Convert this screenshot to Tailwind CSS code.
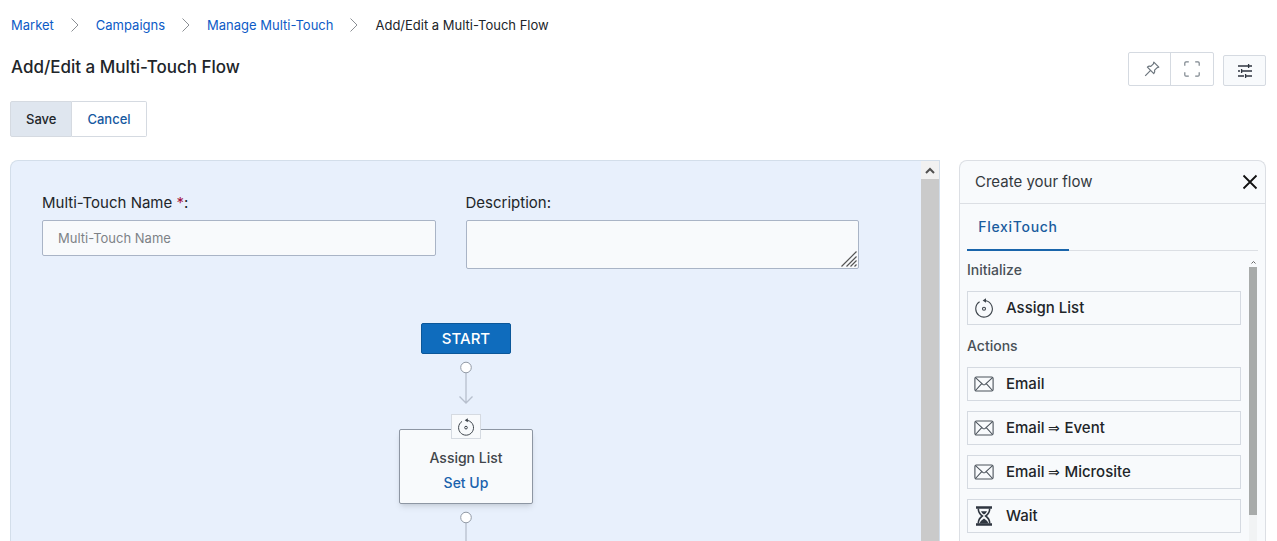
<!DOCTYPE html>
<html lang="en">
<head>
  <meta charset="UTF-8" />
  <meta name="viewport" content="width=device-width, initial-scale=1.0" />
  <title>Add/Edit a Multi-Touch Flow</title>
  <script src="https://cdn.jsdelivr.net/npm/@tailwindcss/browser@4"></script>
</head>
<body class="h-screen overflow-hidden flex flex-col pl-[10px] pr-[11px] bg-white text-[#212529] text-sm font-[Inter,sans-serif]">
  <!-- shared icons -->
  <svg class="hidden">
    <symbol id="icon-chevron" viewBox="0 0 8 14"><path d="M.5.5 7 7 .5 13.5" fill="none" stroke="#8b8f94" /></symbol>
    <symbol id="icon-list" viewBox="0 0 20 20">
      <g fill="none" stroke="#3d444b" stroke-width="1.1">
        <path d="M10 2.500A8.300 8.300 0 1 1 5.600 3.800" />
        <circle cx="10" cy="10.700" r="1.500" />
      </g>
      <path d="M8.600 2.500 12 .2v4.600z" fill="#3d444b" />
    </symbol>
    <symbol id="icon-mail" viewBox="0 0 20 16">
      <g fill="none" stroke="#4b535b" stroke-width="1.1">
        <rect x=".9" y="1" width="18.200" height="14" rx="1.500" />
        <path d="m1.500 1.700 7.300 6.600q1.200 1 2.400 0l7.300-6.600M1.500 14.500l6-6.600M18.500 14.500l-6-6.600" />
      </g>
    </symbol>
    <symbol id="icon-wait" viewBox="0 0 18 20">
      <path d="M1 .3h16v2.400H1zM1 17.300h16v2.400H1z" fill="#2f3640" />
      <path d="M3.300 2.500c0 4 1.300 5.600 4 7.500-2.700 1.900-4 3.500-4 7.500M14.700 2.500c0 4-1.300 5.600-4 7.500 2.700 1.900 4 3.500 4 7.500" fill="none" stroke="#2f3640" stroke-width="1.600" />
      <path d="M6 5.200h6Q11 7.500 9 8.500 7 7.500 6 5.200zM9 12.500q3.500 2 4.500 5h-9q1-3 4.500-5z" fill="#2f3640" />
    </symbol>
  </svg>

  <nav aria-label="Breadcrumb" class="flex items-center gap-[17px] pt-[15px] pl-px text-[13px] leading-5">
    <a href="#" class="text-[#0d5bc6]">Market</a>
    <svg class="w-2 h-[14px]"><use href="#icon-chevron" /></svg>
    <a href="#" class="text-[#0d5bc6]">Campaigns</a>
    <svg class="w-2 h-[14px]"><use href="#icon-chevron" /></svg>
    <a href="#" class="text-[#0d5bc6]">Manage Multi-Touch</a>
    <svg class="w-2 h-[14px]"><use href="#icon-chevron" /></svg>
    <span>Add/Edit a Multi-Touch Flow</span>
  </nav>

  <header class="flex justify-between items-start pt-[17px] pl-px">
    <h1 class="pt-[3px] text-[17px] leading-6 font-medium">Add/Edit a Multi-Touch Flow</h1>
    <div class="flex items-end gap-[9px]">
      <div class="flex h-[34px] border border-[#d5dae1] rounded-xs">
        <button aria-label="Pin" class="w-[42px] pl-1 flex items-center justify-center border-r border-[#d5dae1]">
          <svg class="size-4" viewBox="0 0 16 16" fill="none" stroke="#6c757d" stroke-width="1.200" stroke-linejoin="round"><path d="M9.800 1.200 14.800 6.200 13.200 6.600 10.600 9.200Q11.200 11.300 9.800 12.600L3.400 6.200Q4.700 4.800 6.800 5.400L9.400 2.800zM6.600 9.400 1.200 14.800" /></svg>
        </button>
        <button aria-label="Full screen" class="w-[42px] flex items-center justify-center">
          <svg class="size-4" viewBox="0 0 16 16" fill="none" stroke="#7d858d" stroke-width="1.200"><path d="M.8 4.800V2Q.8.8 2 .8h2.800M11.200.8H14q1.200 0 1.200 1.200v2.800M15.200 11.200V14q0 1.200-1.200 1.200h-2.800M4.800 15.200H2Q.8 15.200.8 14v-2.800" /></svg>
        </button>
      </div>
      <button aria-label="Settings" class="w-[43px] h-[31px] flex items-center justify-center border border-[#d5dae1] rounded-xs bg-[#f8fafc]">
        <svg class="w-4 h-[14px]" viewBox="0 0 16 14" stroke="#2f3640" stroke-width="1.300"><path d="M1 2h10M12 2h3M11.600 0v4M1 7h2M5 7h10M4.600 5v4M1 12h6M9 12h6M8.600 10v4" /></svg>
      </button>
    </div>
  </header>

  <div class="flex pt-[15px] text-[13px] font-medium">
    <button class="h-[36px] px-[15px] border border-[#d5dae1] rounded-l-xs bg-[#dfe6ef]">Save</button>
    <button class="h-[36px] px-[15px] border border-l-0 border-[#d5dae1] rounded-r-xs text-[#15599f]">Cancel</button>
  </div>

  <main class="flex-1 min-h-0 flex gap-[19px] pt-[23px]">
    <section class="flex-1 flex overflow-hidden border border-b-0 border-[#d3deea] rounded-tl-lg bg-[#e8f0fc]">
      <div class="flex-1 flex flex-col items-center">
        <div class="self-stretch grid grid-cols-2 gap-[30px] pt-[30px] pl-[31px] pr-[62px]">
          <div class="flex flex-col gap-[5px]">
            <label for="name" class="text-[15px] leading-6">Multi-Touch Name <span class="text-[#a3123f]">*</span>:</label>
            <input id="name" type="text" placeholder="Multi-Touch Name" class="h-9 px-[15px] border border-[#a9b4c6] rounded-xs bg-[#f8fafc] text-[13px] placeholder:text-[#7d8287]" />
          </div>
          <div class="flex flex-col gap-[5px]">
            <label for="description" class="text-[15px] leading-6">Description:</label>
            <div class="relative flex">
              <textarea id="description" class="w-full h-[49px] px-[15px] py-1 resize-none border border-[#a9b4c6] rounded-xs bg-[#f8fafc] text-[13px]"></textarea>
              <svg class="absolute right-0.5 bottom-0.5 size-4" viewBox="0 0 16 16" stroke="#555" stroke-width="1.200"><path d="M.5 15.500 15.500.5M5.500 15.500l10-10M9.500 15.500l6-6M13.500 15.500l2-2" /></svg>
            </div>
          </div>
        </div>

        <button class="mt-[54px] w-[90px] h-[31px] shrink-0 rounded-xs bg-[#0f6cbd] border border-[#0b5799] text-white text-[15px] leading-5 font-medium">START</button>
        <svg class="mt-[7px] w-4 h-[43px] shrink-0" viewBox="0 0 16 43" fill="none" stroke="#b7bfcd">
          <path d="M8 12v30M1.500 35.500 8 42l6.500-6.500" stroke-width="1.300" />
          <circle cx="8" cy="6.500" r="5.300" fill="#fff" stroke="#929aa6" />
        </svg>
        <div class="relative mt-[25px] w-[134px] h-[75px] shrink-0 flex flex-col items-center pt-[18px] gap-[5px] border border-[#8d96a3] rounded-xs bg-[#f8fafc] shadow-md leading-5 font-medium">
          <div class="absolute -top-4 w-[30px] h-[25px] flex items-center justify-center border border-[#d5dae1] bg-[#f8fafc]">
            <svg class="size-[18px]"><use href="#icon-list" /></svg>
          </div>
          <div class="text-[#41464b]">Assign List</div>
          <a href="#" class="text-[#1a62ad]">Set Up</a>
        </div>
        <svg class="mt-[7px] w-4 h-[43px] shrink-0" viewBox="0 0 16 43" fill="none" stroke="#b7bfcd">
          <path d="M8 12v30M1.500 35.500 8 42l6.500-6.500" stroke-width="1.300" />
          <circle cx="8" cy="6.500" r="5.300" fill="#fff" stroke="#929aa6" />
        </svg>
      </div>
      <div class="w-[18px] flex flex-col bg-[#cacaca]">
        <div class="h-[18px] flex items-center justify-center bg-[#f1f1f1]">
          <svg class="w-[10px] h-[7px]" viewBox="0 0 10 7" fill="none" stroke="#505050" stroke-width="2"><path d="M1 6 5 2l4 4" /></svg>
        </div>
      </div>
    </section>

    <aside class="w-[307px] flex flex-col overflow-hidden border border-b-0 border-[#dcdfe4] rounded-t-lg bg-[#f8fafc]">
      <div class="h-[43px] shrink-0 flex items-center justify-between pl-[15px] pr-[7px] border-b border-[#dcdfe4]">
        <h2 class="text-[15px] text-[#34393e]">Create your flow</h2>
        <button aria-label="Close"><svg class="size-4" viewBox="0 0 16 16" stroke="#111" stroke-width="1.800"><path d="m1.500 1.500 13 13M14.500 1.500l-13 13" /></svg></button>
      </div>
      <div role="tablist" class="h-[47px] shrink-0 flex mx-[7px] border-b border-[#dcdfe4]">
        <button role="tab" aria-selected="true" class="w-[102px] -mb-px border-b-2 border-[#1a65ab] text-[#1a5c9e] font-medium tracking-wider">FlexiTouch</button>
      </div>
      <div class="flex-1 min-h-0 flex justify-between pl-[7px] pr-2">
        <div class="w-[274px] flex flex-col">
          <h3 class="pt-[9px] leading-5 font-medium text-[#495057]">Initialize</h3>
          <button class="mt-[11px] h-[34px] shrink-0 flex items-center gap-3 pl-1.5 border border-[#d5dae1] text-[15px] font-medium">
            <svg class="size-5"><use href="#icon-list" /></svg>Assign List
          </button>
          <h3 class="pt-[11px] leading-5 font-medium text-[#495057]">Actions</h3>
          <div class="mt-[11px] flex flex-col gap-[10px] text-[15px] font-medium">
            <button class="h-[34px] flex items-center gap-3 pl-1.5 border border-[#d5dae1]">
              <svg class="w-5 h-4"><use href="#icon-mail" /></svg>Email
            </button>
            <button class="h-[34px] flex items-center gap-3 pl-1.5 border border-[#d5dae1]">
              <svg class="w-5 h-4"><use href="#icon-mail" /></svg><span>Email <span class="text-sm leading-4 font-normal font-[Liberation_Serif,serif]">⇒</span> Event</span>
            </button>
            <button class="h-[34px] flex items-center gap-3 pl-1.5 border border-[#d5dae1]">
              <svg class="w-5 h-4"><use href="#icon-mail" /></svg><span>Email <span class="text-sm leading-4 font-normal font-[Liberation_Serif,serif]">⇒</span> Microsite</span>
            </button>
            <button class="h-[34px] flex items-center gap-3 pl-1.5 border border-[#d5dae1]">
              <svg class="w-5 h-5"><use href="#icon-wait" /></svg>Wait
            </button>
          </div>
        </div>
        <div class="w-2 flex flex-col items-center pt-[10px] bg-[#f8fafc]">
          <svg class="w-[5px] h-[3px] mb-[3px] shrink-0" viewBox="0 0 5 3" fill="none" stroke="#666"><path d="M.5 2.500l2-2 2 2" /></svg>
          <div class="w-full h-[248px] shrink-0 bg-[#a8abaa]"></div>
          <div class="w-full flex-1 bg-[#f1f3f4]"></div>
        </div>
      </div>
    </aside>
  </main>
</body>
</html>
